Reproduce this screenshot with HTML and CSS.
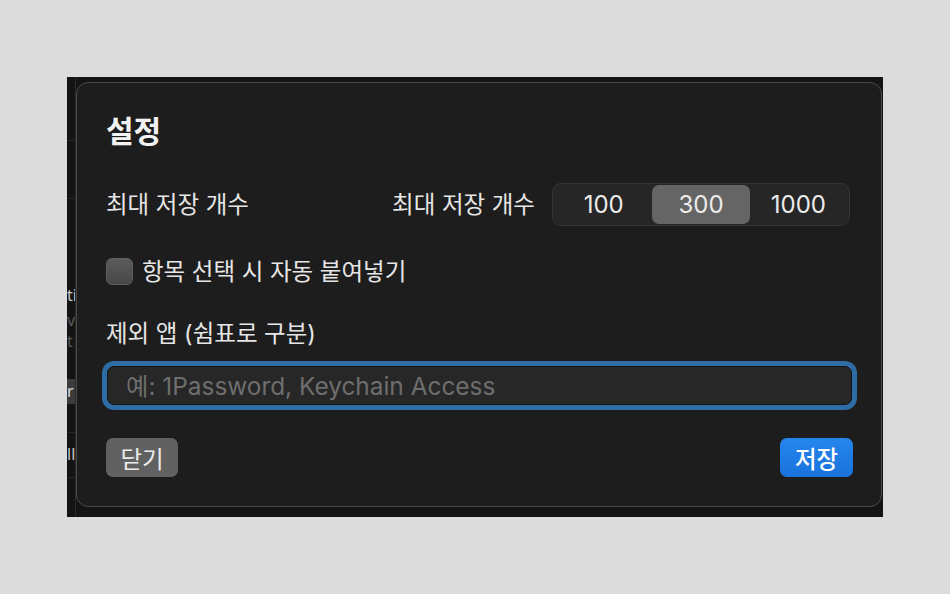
FILE: index.html
```html
<!DOCTYPE html>
<html lang="ko">
<head>
<meta charset="utf-8">
<title>설정</title>
<link rel="stylesheet" href="styles.css">
</head>
<body>
<div class="backdrop">
  <div class="strip">
    <div class="strip-line l1"></div>
    <div class="strip-line l2"></div>
    <div class="strip-text t1">ti</div>
    <div class="strip-text t2 dim">vi</div>
    <div class="strip-text t3 dim">t</div>
    <div class="strip-box">r</div>
    <div class="strip-line l3"></div>
    <div class="strip-text t4">ll</div>
    <div class="strip-line l4"></div>
  </div>
  <div class="dialog">
    <h1 class="title">설정</h1>
    <div class="row">
      <span class="label">최대 저장 개수</span>
      <div class="row-right">
        <span class="label">최대 저장 개수</span>
        <div class="segmented">
          <span class="seg">100</span>
          <span class="seg selected">300</span>
          <span class="seg">1000</span>
        </div>
      </div>
    </div>
    <label class="check-row">
      <span class="checkbox"></span>
      <span class="label">항목 선택 시 자동 붙여넣기</span>
    </label>
    <div class="field-label label">제외 앱 (쉼표로 구분)</div>
    <input class="field" type="text" placeholder="예: 1Password, Keychain Access">
    <div class="footer">
      <button class="btn btn-close">닫기</button>
      <button class="btn btn-save">저장</button>
    </div>
  </div>
</div>
</body>
</html>
```
FILE: styles.css
```css
* { box-sizing: border-box; }
html, body {
  margin: 0;
  padding: 0;
  width: 950px;
  height: 594px;
  background: #dcdcdc;
  font-family: "Inter", "Noto Sans CJK KR", sans-serif;
  overflow: hidden;
}
.backdrop {
  margin: 77px 0 0 67px;
  width: 816px;
  height: 440px;
  background: #141414;
  display: flex;
  align-items: flex-start;
}
.strip {
  width: 9px;
  height: 100%;
  border-right: 1px solid #2a2a2a;
  display: flex;
  flex-direction: column;
  overflow: hidden;
  flex-shrink: 0;
}
.strip-line { height: 1px; background: #262626; flex-shrink: 0; }
.l1 { margin-top: 63px; }
.l2 { margin-top: 57px; }
.l3 { margin-top: 28px; }
.l4 { margin-top: 13px; }
.strip-text {
  height: 20px;
  line-height: 20px;
  font-family: "Noto Sans", sans-serif;
  font-size: 16px;
  color: #c8c8c8;
  white-space: nowrap;
  flex-shrink: 0;
}
.strip-text.dim { color: #5a5a5a; }
.t1 { margin-top: 86px; }
.t2 { margin-top: 5px; }
.t3 { margin-top: 1px; }
.t4 { margin-top: 11px; }
.strip-box {
  margin-top: 28px;
  height: 25px;
  line-height: 25px;
  background: #3c3c3c;
  color: #dcdcdc;
  font-family: "Noto Sans", sans-serif;
  font-size: 16px;
  flex-shrink: 0;
}
.dialog {
  margin-top: 5px;
  width: 806px;
  height: 425px;
  flex-shrink: 0;
  background: #1d1d1d;
  border: 1px solid #4a4a4a;
  border-radius: 12px;
  padding: 32px 28px 0 29px;
  display: flex;
  flex-direction: column;
  color: #e8e8e8;
}
.title {
  margin: 0;
  font-size: 30px;
  line-height: 32px;
  font-weight: 700;
  color: #f2f2f2;
}
.label {
  font-size: 23.5px;
  line-height: 26px;
  color: #e6e6e6;
  white-space: nowrap;
}
.row {
  margin-top: 36px;
  height: 43px;
  display: flex;
  align-items: center;
  justify-content: space-between;
}
.row-right {
  display: flex;
  align-items: center;
  gap: 17px;
  margin-right: 3px;
}
.segmented {
  width: 298px;
  height: 43px;
  border: 1px solid #353535;
  background: #262626;
  border-radius: 9px;
  padding: 1px 2px;
  display: grid;
  grid-template-columns: repeat(3, 1fr);
}
.seg {
  display: flex;
  align-items: center;
  justify-content: center;
  font-size: 24px;
  color: #ececec;
  border-radius: 7px;
}
.seg.selected { background: #656565; }
.check-row {
  margin-top: 32px;
  height: 27px;
  display: flex;
  align-items: center;
  gap: 9px;
}
.checkbox {
  width: 27px;
  height: 27px;
  border-radius: 6px;
  background: linear-gradient(#5b5b5b, #484848);
  border: 1px solid #5e5e5e;
  flex-shrink: 0;
}
.field-label { margin-top: 36px; }
.field {
  margin: 19px 1px 0 1px;
  height: 39px;
  border: 1px solid #141414;
  border-radius: 7px;
  background: #272727;
  box-shadow: 0 0 0 5px #2e6ca6;
  padding: 0 0 0 18px;
  font-family: "Inter", "Noto Sans CJK KR", sans-serif;
  font-size: 24.4px;
  color: #e8e8e8;
  outline: none;
}
.field::placeholder { color: #6e6e6e; }
.footer {
  margin-top: 33px;
  display: flex;
  justify-content: space-between;
}
.btn {
  height: 39px;
  border: none;
  border-radius: 7px;
  font-family: "Inter", "Noto Sans CJK KR", sans-serif;
  font-size: 23.5px;
  padding: 0;
}
.btn-close {
  width: 72px;
  background: #616161;
  color: #ececec;
  font-weight: 400;
}
.btn-save {
  width: 73px;
  background: linear-gradient(#2586ee, #1a72dc);
  color: #ffffff;
  font-weight: 500;
}
```
